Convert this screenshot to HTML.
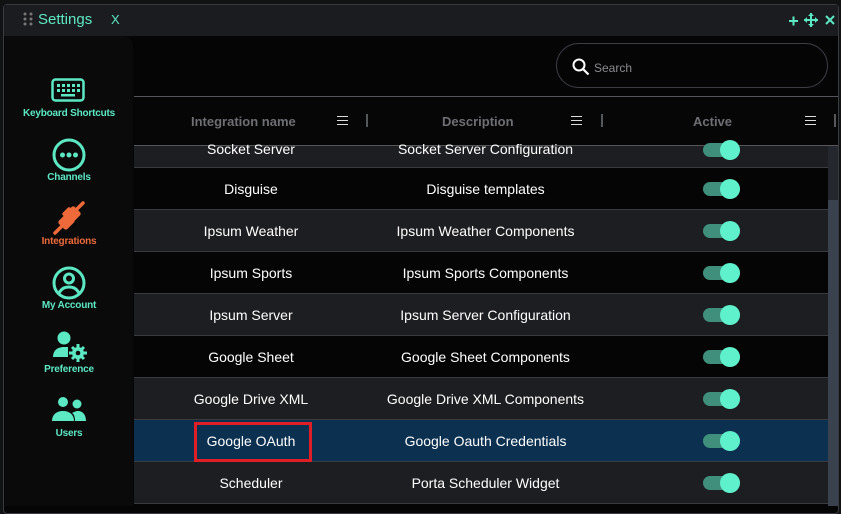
<!DOCTYPE html>
<html><head><meta charset="utf-8"><style>
*{box-sizing:border-box;margin:0;padding:0}
body{width:841px;height:506px;background:#111214;position:relative;overflow:hidden;font-family:"Liberation Sans",sans-serif}
.win{position:absolute;left:3px;top:4px;width:836px;height:510px;border:1px solid #3a3b40;border-radius:4px;background:#050506}
.top{position:absolute;left:4px;top:5px;width:834px;height:31px;background:#1b1c20}
.title{position:absolute;left:38px;top:11px;color:#5de8c4;font-size:15px}
.grip{position:absolute;left:23px;top:12px;width:10px;height:14px}
.x{position:absolute;left:111px;top:12px;color:#5de8c4;font-size:13px}
.side{position:absolute;left:5px;top:36px;width:128px;height:470px;background:#0a0a0b;border-radius:0 10px 0 0}
.item{position:absolute;left:0;width:128px;text-align:center;font-size:10px;font-weight:bold;color:#5de8c4;letter-spacing:-0.2px}
.main{position:absolute;left:133px;top:36px;width:705px;height:470px;background:#050506}
.search{position:absolute;left:556px;top:43px;width:272px;height:45px;border:1px solid #3c3d42;border-radius:23px}
.search span{position:absolute;left:37px;top:17px;color:#8a8b90;font-size:12px}
.hdr{position:absolute;left:134px;top:96px;width:704px;height:50px;border-top:1px solid #55565a;border-bottom:1px solid #55565a;background:#060607}
.h{position:absolute;top:17px;color:#6e6f73;font-size:13px;font-weight:bold}
.menu{position:absolute;top:19px;width:11px;height:9px;border-top:1.5px solid #ddd;border-bottom:1.5px solid #ddd}
.menu:after{content:"";position:absolute;left:0;right:0;top:2.5px;border-top:1.5px solid #ddd}
.sep{position:absolute;top:17px;width:2px;height:13px;background:#55565a}
.row{position:absolute;left:134px;width:694px;height:42px;border-bottom:1px solid #3a3b3f;color:#fff;font-size:14px}
.g{background:#1d1e22}.b{background:#050506}.s{background:#0c3050}
.c1{position:absolute;left:0;width:234px;text-align:center;top:13px}
.c2{position:absolute;left:234px;width:235px;text-align:center;top:13px}
.tg{position:absolute;left:569px;top:14px;width:37px;height:14px;border-radius:7px;background:#3f8f7c}
.tg:after{content:"";position:absolute;left:17px;top:-3px;width:20px;height:20px;border-radius:50%;background:#5ff0cc}
.track{position:absolute;left:828px;top:146px;width:10px;height:360px;background:#24272e}
.thumb{position:absolute;left:828px;top:200px;width:10px;height:306px;background:#3a4250}
</style></head><body>
<div class="win"></div>
<div class="top"></div>
<svg class="grip" viewBox="0 0 10 14"><g fill="#777"><circle cx="2" cy="2" r="1.5"/><circle cx="8" cy="2" r="1.5"/><circle cx="2" cy="7" r="1.5"/><circle cx="8" cy="7" r="1.5"/><circle cx="2" cy="12" r="1.5"/><circle cx="8" cy="12" r="1.5"/></g></svg>
<div class="title">Settings</div><div class="x">X</div>
<svg style="position:absolute;left:787px;top:13px" width="50" height="14" viewBox="0 0 50 14"><g stroke="#5de8c4" stroke-width="2" fill="none"><path d="M2 8h9M6.5 3.5v9"/><path d="M17 7h14M24 0v14"/><path d="M39 3l8 8M47 3l-8 8"/></g><g fill="#5de8c4"><path d="M24 0l-3 3h6zM24 14l-3-3h6zM17 7l3-3v6zM31 7l-3-3v6z"/></g></svg>
<div class="side">
 <svg style="position:absolute;left:46px;top:42px" width="34" height="26" viewBox="0 0 34 26"><rect x="1.5" y="1.5" width="31" height="21" rx="3" fill="none" stroke="#5de8c4" stroke-width="2.5"/><g fill="#5de8c4"><rect x="6" y="6" width="3" height="3"/><rect x="11" y="6" width="3" height="3"/><rect x="16" y="6" width="3" height="3"/><rect x="21" y="6" width="3" height="3"/><rect x="26" y="6" width="3" height="3"/><rect x="6" y="11" width="3" height="3"/><rect x="11" y="11" width="3" height="3"/><rect x="16" y="11" width="3" height="3"/><rect x="21" y="11" width="3" height="3"/><rect x="26" y="11" width="3" height="3"/><rect x="10" y="16" width="14" height="2.5"/></g></svg>
 <div class="item" style="top:72px">Keyboard Shortcuts</div>
 <svg style="position:absolute;left:47px;top:102px" width="34" height="34" viewBox="0 0 34 34"><circle cx="17" cy="17" r="15" fill="none" stroke="#5de8c4" stroke-width="3"/><g fill="#5de8c4"><circle cx="10.5" cy="17" r="2.5"/><circle cx="17" cy="17" r="2.5"/><circle cx="23.5" cy="17" r="2.5"/></g></svg>
 <div class="item" style="top:136px">Channels</div>
 <svg style="position:absolute;left:46px;top:164px" width="36" height="36" viewBox="0 0 36 36"><g fill="#ef6a3a" stroke="#ef6a3a" stroke-linecap="round"><path d="M4 33l8-8M32 3l-7 7M13 14l5-5M20 21l5-5" stroke-width="3.5"/><rect x="10" y="15" width="11" height="13" rx="2" transform="rotate(45 15.5 21.5)"/><rect x="16" y="8" width="11" height="13" rx="2" transform="rotate(45 21.5 14.5)"/></g></svg>
 <div class="item" style="top:200px;color:#ef6a3a">Integrations</div>
 <svg style="position:absolute;left:47px;top:230px" width="34" height="34" viewBox="0 0 34 34"><circle cx="17" cy="17" r="15" fill="none" stroke="#5de8c4" stroke-width="3"/><circle cx="17" cy="12.5" r="4.5" fill="none" stroke="#5de8c4" stroke-width="3"/><path d="M7 27c3-5 6-6 10-6s7 1 10 6" fill="none" stroke="#5de8c4" stroke-width="3"/></svg>
 <div class="item" style="top:264px">My Account</div>
 <svg style="position:absolute;left:46px;top:294px" width="38" height="32" viewBox="0 0 38 32"><g fill="#5de8c4"><circle cx="13" cy="8" r="6.5"/><path d="M2 27c0-7 5-10 11-10h4v10z"/><circle cx="27" cy="23" r="6"/><path d="M27 14v18M18 23h18M21 17l12 12M33 17l-12 12" stroke="#5de8c4" stroke-width="3"/></g><circle cx="27" cy="23" r="2.3" fill="#0a0a0b"/></svg>
 <div class="item" style="top:328px">Preference</div>
 <svg style="position:absolute;left:46px;top:360px" width="36" height="26" viewBox="0 0 36 26"><g fill="#5de8c4"><circle cx="12" cy="6" r="5"/><circle cx="26" cy="8" r="4.5"/><path d="M1 25c0-6 4-10 11-10s11 4 11 10z"/><path d="M24 25c0-4-1-7-3-8 2-1 4-2 6-2 5 0 8 4 8 10z"/></g></svg>
 <div class="item" style="top:392px">Users</div>
</div>
<div class="main"></div>
<div class="search"><svg style="position:absolute;left:15px;top:14px" width="18" height="18" viewBox="0 0 18 18"><circle cx="7" cy="7" r="5.5" fill="none" stroke="#fff" stroke-width="2"/><path d="M11 11l5.5 5.5" stroke="#fff" stroke-width="2.2"/></svg><span>Search</span></div>
<div class="hdr">
 <div class="h" style="left:57px">Integration name</div><div class="menu" style="left:203px"></div><div class="sep" style="left:232px"></div>
 <div class="h" style="left:308px">Description</div><div class="menu" style="left:437px"></div><div class="sep" style="left:467px"></div>
 <div class="h" style="left:559px">Active</div><div class="menu" style="left:671px"></div><div class="sep" style="left:700px"></div>
</div>
<div class="row g" style="top:146px;height:22px"><div class="c1" style="top:-5px">Socket Server</div><div class="c2" style="top:-5px">Socket Server Configuration</div><div class="tg" style="top:-3px"></div></div>
<div class="row b" style="top:168px"><div class="c1">Disguise</div><div class="c2">Disguise templates</div><div class="tg"></div></div>
<div class="row g" style="top:210px"><div class="c1">Ipsum Weather</div><div class="c2">Ipsum Weather Components</div><div class="tg"></div></div>
<div class="row b" style="top:252px"><div class="c1">Ipsum Sports</div><div class="c2">Ipsum Sports Components</div><div class="tg"></div></div>
<div class="row g" style="top:294px"><div class="c1">Ipsum Server</div><div class="c2">Ipsum Server Configuration</div><div class="tg"></div></div>
<div class="row b" style="top:336px"><div class="c1">Google Sheet</div><div class="c2">Google Sheet Components</div><div class="tg"></div></div>
<div class="row g" style="top:378px"><div class="c1">Google Drive XML</div><div class="c2">Google Drive XML Components</div><div class="tg"></div></div>
<div class="row s" style="top:420px"><div class="c1">Google OAuth</div><div class="c2">Google Oauth Credentials</div><div class="tg"></div>
 <div style="position:absolute;left:60px;top:2px;width:118px;height:40px;border:3px solid #e01e26"></div></div>
<div class="row g" style="top:462px"><div class="c1">Scheduler</div><div class="c2">Porta Scheduler Widget</div><div class="tg"></div></div>
<div class="track"></div><div class="thumb"></div>
</body></html>
